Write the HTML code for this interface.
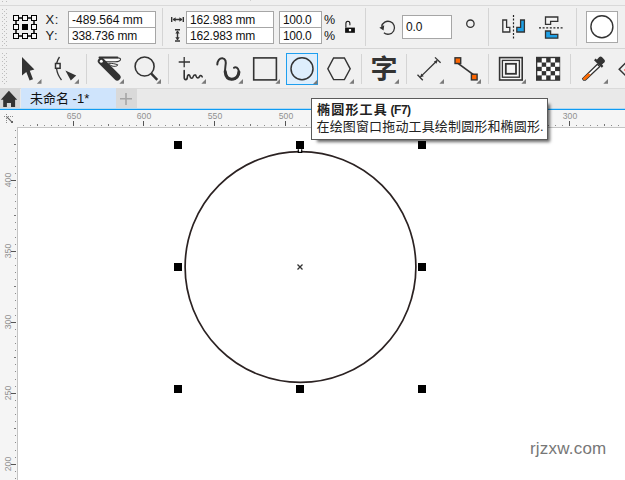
<!DOCTYPE html>
<html lang="zh-CN">
<head>
<meta charset="utf-8">
<title>未命名 -1</title>
<style>
html,body{margin:0;padding:0;}
body{width:625px;height:480px;overflow:hidden;background:#f0f0f0;position:relative;
 font-family:"Liberation Sans","Noto Sans CJK SC",sans-serif;font-size:11px;color:#1a1a1a;}
.abs{position:absolute;}
.hline{position:absolute;left:0;width:625px;height:1px;background:#d4d4d4;}
.vsep{position:absolute;width:1px;background:#d4d4d4;}
.inp{position:absolute;background:#fff;border:1px solid #a6a6a6;box-sizing:border-box;
 font-size:12px;line-height:16px;padding-left:3px;letter-spacing:-0.15px;white-space:nowrap;color:#111;}
.lbl{position:absolute;font-size:12px;line-height:12px;color:#222;white-space:nowrap;}
.grip{position:absolute;left:2px;width:5px;
 background-image:radial-gradient(circle at 0.5px 0.5px,#b8b8b8 0.55px,transparent 0.75px);
 background-size:2px 2px;}
#tabbar{position:absolute;left:0;top:88px;width:625px;height:21px;background:#e9e9e9;box-shadow:inset 0 1px 0 #dadada;}
#home{position:absolute;left:0;top:0;width:20px;height:21px;background:#d6d6d6;}
#tab{position:absolute;left:21px;top:0;width:95px;height:21px;background:#cfe4fc;
 font-size:13px;line-height:21px;color:#111;padding-left:9px;box-sizing:border-box;white-space:nowrap;}
#plus{position:absolute;left:116px;top:0;width:21px;height:21px;background:#d9d9d9;}
#blueline{position:absolute;left:0;top:108px;width:625px;height:2px;background:linear-gradient(#b3d9f1,#b3d9f1) 0 0/100% 1px no-repeat,#0e9bf3;}
#ruler{position:absolute;left:0;top:110px;width:625px;height:370px;background:#f5f5f5;}
#canvas{position:absolute;left:17px;top:127px;width:608px;height:353px;background:#fff;
 border-left:1px solid #c4c4c4;border-top:1px solid #c4c4c4;box-sizing:border-box;}
.rl span,.vl span{display:inline-block;transform:scaleX(0.9);}
.rl{position:absolute;font-size:9.6px;line-height:10px;color:#909090;white-space:nowrap;width:30px;text-align:center;}
.vl{position:absolute;font-size:9.6px;line-height:10px;color:#909090;white-space:nowrap;width:30px;text-align:center;
 transform-origin:0 0;transform:rotate(-90deg);}
#tip{position:absolute;left:311px;top:98px;width:237px;height:42px;background:#fff;
 border:1px solid #5a5a5a;box-sizing:border-box;box-shadow:4px 4px 3px -2px rgba(0,0,0,0.6);}
#tip .t{position:absolute;left:5px;top:3px;font-size:13px;letter-spacing:1.2px;line-height:16px;font-weight:bold;color:#222;white-space:nowrap;}
#tip .d{position:absolute;left:4.5px;top:19.5px;font-size:13px;letter-spacing:0.15px;line-height:16px;color:#222;white-space:nowrap;}
#wm{position:absolute;left:530px;top:438px;font-size:17px;letter-spacing:0.2px;line-height:22px;color:#777;white-space:nowrap;}
</style>
</head>
<body>
<!-- top strip -->
<div class="hline" style="top:5px;background:#d9d9d9"></div>
<div class="hline" style="top:48px"></div>

<!-- property bar -->
<div class="lbl" style="left:45.5px;top:14px;font-size:13px;letter-spacing:0.5px">X:</div>
<div class="lbl" style="left:45.5px;top:30px;font-size:13px;letter-spacing:0.5px">Y:</div>
<div class="inp" style="left:68px;top:11px;width:88px;height:17px;letter-spacing:0">-489.564 mm</div>
<div class="inp" style="left:68px;top:27px;width:88px;height:17px">338.736 mm</div>
<div class="vsep" style="left:162px;top:8px;height:38px"></div>
<div class="inp" style="left:186px;top:11px;width:88px;height:17px">162.983 mm</div>
<div class="inp" style="left:186px;top:27px;width:88px;height:17px">162.983 mm</div>
<div class="inp" style="left:279px;top:11px;width:43px;height:17px;letter-spacing:-0.35px">100.0</div>
<div class="inp" style="left:279px;top:27px;width:43px;height:17px;letter-spacing:-0.35px">100.0</div>
<div class="lbl" style="left:324px;top:14px;font-size:12.5px;color:#111">%</div>
<div class="lbl" style="left:324px;top:30px;font-size:12.5px;color:#111">%</div>
<div class="vsep" style="left:365px;top:8px;height:38px"></div>
<div class="inp" style="left:402px;top:15px;width:50px;height:24px;line-height:22px">0.0</div>
<div class="vsep" style="left:488px;top:8px;height:38px"></div>
<div class="vsep" style="left:576px;top:8px;height:38px"></div>
<div class="abs" style="left:586px;top:11px;width:32px;height:32px;background:#fff;border:1px solid #a8a8a8;box-sizing:border-box"></div>

<!-- toolbox -->
<div class="vsep" style="left:86px;top:54px;height:30px"></div>
<div class="vsep" style="left:168px;top:54px;height:30px"></div>
<div class="abs" style="left:286px;top:53px;width:32px;height:32px;background:#deeefc;border:1px solid #1e9fef;box-sizing:border-box"></div>
<div class="vsep" style="left:361px;top:54px;height:30px"></div>
<div class="vsep" style="left:406px;top:54px;height:30px"></div>
<div class="vsep" style="left:488px;top:54px;height:30px"></div>
<div class="vsep" style="left:570px;top:54px;height:30px"></div>
<div class="abs" style="left:371px;top:54.3px;font-size:26px;line-height:30px;transform:scaleX(1.04);transform-origin:50% 50%;font-weight:bold;color:#333;font-family:'Liberation Sans','Noto Sans CJK SC',sans-serif">字</div>

<!-- tab bar -->
<div id="tabbar">
  <div id="home"></div>
  <div id="tab">未命名 -1*</div>
  <div id="plus"></div>
</div>
<div id="blueline"></div>
<div id="ruler"></div>

<!-- ruler labels -->
<div class="rl" style="left:58.6px;top:111.4px"><span>650</span></div>
<div class="rl" style="left:128.6px;top:111.4px"><span>600</span></div>
<div class="rl" style="left:199.6px;top:111.4px"><span>550</span></div>
<div class="rl" style="left:270.6px;top:111.4px"><span>500</span></div>
<div class="rl" style="left:554.6px;top:111.4px"><span>300</span></div>
<div class="vl" style="left:2.6px;top:195.1px"><span>400</span></div>
<div class="vl" style="left:2.6px;top:266.1px"><span>350</span></div>
<div class="vl" style="left:2.6px;top:337.1px"><span>300</span></div>
<div class="vl" style="left:2.6px;top:408.2px"><span>250</span></div>
<div class="vl" style="left:2.6px;top:479.2px"><span>200</span></div>

<div id="canvas"></div>

<svg class="abs" style="left:0;top:0" width="625" height="480" viewBox="0 0 625 480">
<defs>
  <pattern id="gp" x="2" y="1" width="4" height="4" patternUnits="userSpaceOnUse">
    <rect x="0" y="0" width="1" height="1" fill="#bdbdbd"/><rect x="2" y="2" width="1" height="1" fill="#bdbdbd"/>
  </pattern>
</defs>
<g shape-rendering="crispEdges">
<rect x="2" y="0" width="5" height="3" fill="url(#gp)"/>
<rect x="250" y="0" width="1" height="1" fill="#cfcfcf"/>
<rect x="2" y="9" width="5" height="37" fill="url(#gp)"/>
<rect x="2" y="52" width="5" height="33" fill="url(#gp)"/>
<rect x="23" y="125" width="1" height="1" fill="#8c8c8c"/>
<rect x="30" y="125" width="1" height="1" fill="#8c8c8c"/>
<rect x="37" y="124" width="1" height="2" fill="#777"/>
<rect x="44" y="125" width="1" height="1" fill="#8c8c8c"/>
<rect x="51" y="125" width="1" height="1" fill="#8c8c8c"/>
<rect x="58" y="125" width="1" height="1" fill="#8c8c8c"/>
<rect x="65" y="125" width="1" height="1" fill="#8c8c8c"/>
<rect x="73" y="121" width="1" height="5" fill="#555"/>
<rect x="80" y="125" width="1" height="1" fill="#8c8c8c"/>
<rect x="87" y="125" width="1" height="1" fill="#8c8c8c"/>
<rect x="94" y="125" width="1" height="1" fill="#8c8c8c"/>
<rect x="101" y="125" width="1" height="1" fill="#8c8c8c"/>
<rect x="108" y="124" width="1" height="2" fill="#777"/>
<rect x="115" y="125" width="1" height="1" fill="#8c8c8c"/>
<rect x="122" y="125" width="1" height="1" fill="#8c8c8c"/>
<rect x="129" y="125" width="1" height="1" fill="#8c8c8c"/>
<rect x="136" y="125" width="1" height="1" fill="#8c8c8c"/>
<rect x="143" y="121" width="1" height="5" fill="#555"/>
<rect x="150" y="125" width="1" height="1" fill="#8c8c8c"/>
<rect x="158" y="125" width="1" height="1" fill="#8c8c8c"/>
<rect x="165" y="125" width="1" height="1" fill="#8c8c8c"/>
<rect x="172" y="125" width="1" height="1" fill="#8c8c8c"/>
<rect x="179" y="124" width="1" height="2" fill="#777"/>
<rect x="186" y="125" width="1" height="1" fill="#8c8c8c"/>
<rect x="193" y="125" width="1" height="1" fill="#8c8c8c"/>
<rect x="200" y="125" width="1" height="1" fill="#8c8c8c"/>
<rect x="207" y="125" width="1" height="1" fill="#8c8c8c"/>
<rect x="214" y="121" width="1" height="5" fill="#555"/>
<rect x="221" y="125" width="1" height="1" fill="#8c8c8c"/>
<rect x="228" y="125" width="1" height="1" fill="#8c8c8c"/>
<rect x="236" y="125" width="1" height="1" fill="#8c8c8c"/>
<rect x="243" y="125" width="1" height="1" fill="#8c8c8c"/>
<rect x="250" y="124" width="1" height="2" fill="#777"/>
<rect x="257" y="125" width="1" height="1" fill="#8c8c8c"/>
<rect x="264" y="125" width="1" height="1" fill="#8c8c8c"/>
<rect x="271" y="125" width="1" height="1" fill="#8c8c8c"/>
<rect x="278" y="125" width="1" height="1" fill="#8c8c8c"/>
<rect x="285" y="121" width="1" height="5" fill="#555"/>
<rect x="292" y="125" width="1" height="1" fill="#8c8c8c"/>
<rect x="299" y="125" width="1" height="1" fill="#8c8c8c"/>
<rect x="306" y="125" width="1" height="1" fill="#8c8c8c"/>
<rect x="314" y="125" width="1" height="1" fill="#8c8c8c"/>
<rect x="321" y="124" width="1" height="2" fill="#777"/>
<rect x="328" y="125" width="1" height="1" fill="#8c8c8c"/>
<rect x="335" y="125" width="1" height="1" fill="#8c8c8c"/>
<rect x="342" y="125" width="1" height="1" fill="#8c8c8c"/>
<rect x="349" y="125" width="1" height="1" fill="#8c8c8c"/>
<rect x="356" y="121" width="1" height="5" fill="#555"/>
<rect x="363" y="125" width="1" height="1" fill="#8c8c8c"/>
<rect x="370" y="125" width="1" height="1" fill="#8c8c8c"/>
<rect x="377" y="125" width="1" height="1" fill="#8c8c8c"/>
<rect x="384" y="125" width="1" height="1" fill="#8c8c8c"/>
<rect x="392" y="124" width="1" height="2" fill="#777"/>
<rect x="399" y="125" width="1" height="1" fill="#8c8c8c"/>
<rect x="406" y="125" width="1" height="1" fill="#8c8c8c"/>
<rect x="413" y="125" width="1" height="1" fill="#8c8c8c"/>
<rect x="420" y="125" width="1" height="1" fill="#8c8c8c"/>
<rect x="427" y="121" width="1" height="5" fill="#555"/>
<rect x="434" y="125" width="1" height="1" fill="#8c8c8c"/>
<rect x="441" y="125" width="1" height="1" fill="#8c8c8c"/>
<rect x="448" y="125" width="1" height="1" fill="#8c8c8c"/>
<rect x="455" y="125" width="1" height="1" fill="#8c8c8c"/>
<rect x="462" y="124" width="1" height="2" fill="#777"/>
<rect x="470" y="125" width="1" height="1" fill="#8c8c8c"/>
<rect x="477" y="125" width="1" height="1" fill="#8c8c8c"/>
<rect x="484" y="125" width="1" height="1" fill="#8c8c8c"/>
<rect x="491" y="125" width="1" height="1" fill="#8c8c8c"/>
<rect x="498" y="121" width="1" height="5" fill="#555"/>
<rect x="505" y="125" width="1" height="1" fill="#8c8c8c"/>
<rect x="512" y="125" width="1" height="1" fill="#8c8c8c"/>
<rect x="519" y="125" width="1" height="1" fill="#8c8c8c"/>
<rect x="526" y="125" width="1" height="1" fill="#8c8c8c"/>
<rect x="533" y="124" width="1" height="2" fill="#777"/>
<rect x="540" y="125" width="1" height="1" fill="#8c8c8c"/>
<rect x="548" y="125" width="1" height="1" fill="#8c8c8c"/>
<rect x="555" y="125" width="1" height="1" fill="#8c8c8c"/>
<rect x="562" y="125" width="1" height="1" fill="#8c8c8c"/>
<rect x="569" y="121" width="1" height="5" fill="#555"/>
<rect x="576" y="125" width="1" height="1" fill="#8c8c8c"/>
<rect x="583" y="125" width="1" height="1" fill="#8c8c8c"/>
<rect x="590" y="125" width="1" height="1" fill="#8c8c8c"/>
<rect x="597" y="125" width="1" height="1" fill="#8c8c8c"/>
<rect x="604" y="124" width="1" height="2" fill="#777"/>
<rect x="611" y="125" width="1" height="1" fill="#8c8c8c"/>
<rect x="618" y="125" width="1" height="1" fill="#8c8c8c"/>
<rect x="15" y="130" width="1" height="1" fill="#8c8c8c"/>
<rect x="15" y="137" width="1" height="1" fill="#8c8c8c"/>
<rect x="14" y="144" width="2" height="1" fill="#777"/>
<rect x="15" y="151" width="1" height="1" fill="#8c8c8c"/>
<rect x="15" y="158" width="1" height="1" fill="#8c8c8c"/>
<rect x="15" y="166" width="1" height="1" fill="#8c8c8c"/>
<rect x="15" y="173" width="1" height="1" fill="#8c8c8c"/>
<rect x="11" y="180" width="5" height="1" fill="#555"/>
<rect x="15" y="187" width="1" height="1" fill="#8c8c8c"/>
<rect x="15" y="194" width="1" height="1" fill="#8c8c8c"/>
<rect x="15" y="201" width="1" height="1" fill="#8c8c8c"/>
<rect x="15" y="208" width="1" height="1" fill="#8c8c8c"/>
<rect x="14" y="215" width="2" height="1" fill="#777"/>
<rect x="15" y="222" width="1" height="1" fill="#8c8c8c"/>
<rect x="15" y="229" width="1" height="1" fill="#8c8c8c"/>
<rect x="15" y="237" width="1" height="1" fill="#8c8c8c"/>
<rect x="15" y="244" width="1" height="1" fill="#8c8c8c"/>
<rect x="11" y="251" width="5" height="1" fill="#555"/>
<rect x="15" y="258" width="1" height="1" fill="#8c8c8c"/>
<rect x="15" y="265" width="1" height="1" fill="#8c8c8c"/>
<rect x="15" y="272" width="1" height="1" fill="#8c8c8c"/>
<rect x="15" y="279" width="1" height="1" fill="#8c8c8c"/>
<rect x="14" y="286" width="2" height="1" fill="#777"/>
<rect x="15" y="293" width="1" height="1" fill="#8c8c8c"/>
<rect x="15" y="300" width="1" height="1" fill="#8c8c8c"/>
<rect x="15" y="308" width="1" height="1" fill="#8c8c8c"/>
<rect x="15" y="315" width="1" height="1" fill="#8c8c8c"/>
<rect x="11" y="322" width="5" height="1" fill="#555"/>
<rect x="15" y="329" width="1" height="1" fill="#8c8c8c"/>
<rect x="15" y="336" width="1" height="1" fill="#8c8c8c"/>
<rect x="15" y="343" width="1" height="1" fill="#8c8c8c"/>
<rect x="15" y="350" width="1" height="1" fill="#8c8c8c"/>
<rect x="14" y="357" width="2" height="1" fill="#777"/>
<rect x="15" y="364" width="1" height="1" fill="#8c8c8c"/>
<rect x="15" y="371" width="1" height="1" fill="#8c8c8c"/>
<rect x="15" y="379" width="1" height="1" fill="#8c8c8c"/>
<rect x="15" y="386" width="1" height="1" fill="#8c8c8c"/>
<rect x="11" y="393" width="5" height="1" fill="#555"/>
<rect x="15" y="400" width="1" height="1" fill="#8c8c8c"/>
<rect x="15" y="407" width="1" height="1" fill="#8c8c8c"/>
<rect x="15" y="414" width="1" height="1" fill="#8c8c8c"/>
<rect x="15" y="421" width="1" height="1" fill="#8c8c8c"/>
<rect x="14" y="428" width="2" height="1" fill="#777"/>
<rect x="15" y="435" width="1" height="1" fill="#8c8c8c"/>
<rect x="15" y="442" width="1" height="1" fill="#8c8c8c"/>
<rect x="15" y="450" width="1" height="1" fill="#8c8c8c"/>
<rect x="15" y="457" width="1" height="1" fill="#8c8c8c"/>
<rect x="11" y="464" width="5" height="1" fill="#555"/>
<rect x="15" y="471" width="1" height="1" fill="#8c8c8c"/>
<rect x="15" y="478" width="1" height="1" fill="#8c8c8c"/>
</g>
  <!-- ruler origin icon -->
  <g fill="#8a8a8a" shape-rendering="crispEdges"><rect x="4" y="116" width="1" height="1"/><rect x="8" y="116" width="1" height="1"/><rect x="10" y="116" width="1" height="1"/><rect x="12" y="116" width="1" height="1"/><rect x="6" y="114" width="1" height="1"/><rect x="6" y="116" width="1" height="1"/><rect x="6" y="118" width="1" height="1"/><rect x="6" y="120" width="1" height="1"/><rect x="6" y="122" width="1" height="1"/></g>
  <path d="M6.6 116.6L11.8 121.8" stroke="#666" stroke-width="1.2" fill="none"/>
  <rect x="11" y="121" width="2" height="2" fill="#666"/>

  <!-- object origin icon -->
  <g shape-rendering="crispEdges" stroke="#000" stroke-width="1" fill="none">
    <rect x="16" y="18" width="18" height="18" stroke-width="1.5" shape-rendering="auto"/>
    <g fill="#f7f7f7">
      <rect x="13.5" y="15.5" width="5" height="5"/><rect x="22.5" y="15.5" width="5" height="5"/><rect x="31.5" y="15.5" width="5" height="5"/>
      <rect x="13.5" y="24.5" width="5" height="5"/><rect x="31.5" y="24.5" width="5" height="5"/>
      <rect x="13.5" y="33.5" width="5" height="5"/><rect x="22.5" y="33.5" width="5" height="5"/><rect x="31.5" y="33.5" width="5" height="5"/>
    </g>
    <rect x="22" y="24" width="6" height="6" fill="#000" stroke="none"/>
  </g>

  <!-- width / height icons -->
  <g stroke="#333" stroke-width="1.4" fill="none">
    <path d="M171.7 17V22M183.3 17V22M173 19.5H182"/>
    <path d="M175 29.8H180M175 41H180M177.5 31V40"/>
  </g>
  <g fill="#333">
    <path d="M172.6 19.5l3-2.2v4.4zM182.4 19.5l-3-2.2v4.4z"/>
    <path d="M177.5 30.6l-2.2 3h4.4zM177.5 40.2l-2.2-3h4.4z"/>
  </g>

  <!-- lock -->
  <g>
    <rect x="345.1" y="27.6" width="9.8" height="5.2" fill="#111"/>
    <path d="M345.9 27.5V23.5a2 2.3 0 0 1 4 0V25.3" stroke="#111" stroke-width="1.05" fill="none"/>
    <rect x="348.9" y="29" width="2.2" height="2.2" fill="#fff"/>
  </g>

  <!-- rotate icon -->
  <path d="M381.6 26.6A6.5 6.5 0 1 1 383.9 32.8" stroke="#333" stroke-width="1.3" fill="none"/>
  <path d="M379.4 27.8L384.2 25.2L383.6 30.4Z" fill="#333"/>

  <!-- small circle -->
  <circle cx="470.4" cy="23.7" r="3.7" fill="none" stroke="#333" stroke-width="1.3"/>

  <!-- mirror horizontal -->
  <path d="M502.8 20H506.6V27.4H509.8V32H502.8Z" fill="#f4f4f4" stroke="#333" stroke-width="1.3"/>
  <path d="M524.4 20H520.6V27.4H516.8V32H524.4Z" fill="#1ea0e6" stroke="#333" stroke-width="1.3"/>
  <path d="M513.5 15V39" stroke="#222" stroke-width="1.2" stroke-dasharray="2 1.6"/>

  <!-- mirror vertical -->
  <path d="M545.5 17H557.8V21.3H550.6V24.3H545.5Z" fill="#f4f4f4" stroke="#333" stroke-width="1.3"/>
  <path d="M545.5 38.2H557.8V34.4H550.6V31H545.5Z" fill="#1ea0e6" stroke="#333" stroke-width="1.3"/>
  <path d="M539 27.8H563" stroke="#222" stroke-width="1.2" stroke-dasharray="2 1.6"/>

  <!-- ellipse property button -->
  <circle cx="601.9" cy="26.8" r="11" fill="none" stroke="#333" stroke-width="1.4"/>

  <!-- ===== toolbox icons ===== -->
  <g fill="#7a7a7a">
    <path d="M41.5 79v4.7h-4.7z"/>
    <path d="M79 79v4.7h-4.7z"/>
    <path d="M124 79v4.7h-4.7z"/>
    <path d="M161 79v4.7h-4.7z"/>
    <path d="M206 79v4.7h-4.7z"/>
    <path d="M243 79v4.7h-4.7z"/>
    <path d="M280 79v4.7h-4.7z"/>
    <path d="M317.5 79.5v4.7h-4.7z"/>
    <path d="M354 79v4.7h-4.7z"/>
    <path d="M399 79v4.7h-4.7z"/>
    <path d="M444 79v4.7h-4.7z"/>
    <path d="M481 79v4.7h-4.7z"/>
    <path d="M526 79v4.7h-4.7z"/>
    <path d="M608 79v4.7h-4.7z"/>
  </g>

  <!-- pick -->
  <path d="M22 57V75.5L26.3 72L29.6 80.6L33 79.2L29.8 70.8L34.4 69.6Z" fill="#333"/>
  <!-- shape tool -->
  <path d="M59.5 57C54.5 64 56 73 61.5 80" stroke="#333" stroke-width="1.3" fill="none"/>
  <rect x="55.5" y="63.5" width="4.6" height="4.8" fill="#f8f8f8" stroke="#333" stroke-width="1.5"/>
  <path d="M65.4 70.4L76.2 75.6L70.8 80.6Z" fill="#333"/>

  <!-- knife -->
  <path d="M100 57.7H116.5C119.4 57.7 121 58.6 120.5 59.8C119.8 61.2 117.8 61.8 115.4 61.8H105Z" fill="#fafafa" stroke="#333" stroke-width="1.1" stroke-linejoin="round"/>
  <path d="M99.5 57.6H117.4" stroke="#333" stroke-width="2" fill="none" stroke-linecap="round"/>
  <path d="M108.6 63.2C112 63.3 115.8 63.9 117.9 64.9C117.2 66.6 113.8 66.8 110.8 65.6Z" fill="#fafafa" stroke="#333" stroke-width="1" stroke-linejoin="round"/>
  <path d="M101.2 61.2L117.2 77.2" stroke="#333" stroke-width="6.8" stroke-linecap="round" fill="none"/>
  <circle cx="101.3" cy="61.3" r="1.5" fill="#fff"/>

  <!-- zoom -->
  <circle cx="144.6" cy="66.5" r="9.5" fill="none" stroke="#333" stroke-width="1.6"/>
  <path d="M151.3 73.6L157.3 79.8" stroke="#333" stroke-width="2.4" fill="none"/>

  <!-- freehand -->
  <path d="M178.7 62H190M184.2 57V67.2" stroke="#333" stroke-width="1.3" fill="none"/>
  <path d="M184.2 70.6V77.6C184.2 80.3 187.2 80.3 187.3 77.4C187.4 74.4 189.6 74 190 76.4C190.4 78.8 192.6 78.8 193.2 76.6C193.8 74.4 195.8 74.4 196.2 76.4C196.6 78.4 198.8 78.4 199.6 76.4C200.2 75 201.4 75.2 202.2 76.8" stroke="#333" stroke-width="1.6" fill="none" stroke-linecap="round" stroke-linejoin="round"/>

  <!-- artistic media -->
  <path d="M217.3 64.6C217.4 60.6 219.6 58 222.4 58.2C225.6 58.5 226.4 61.8 225.4 66.4C224.2 72 225.6 79.2 231.8 79.3C236.8 79.3 239.6 75.2 238.8 71.2C238.2 67.8 235.6 66.4 234 67.8" stroke="#333" stroke-width="2" fill="none" stroke-linecap="round"/>
  <path d="M225.2 71.6C225.6 76 227.6 79.2 231.8 79.2C236.2 79.2 238.8 75.6 238.9 72" stroke="#333" stroke-width="3.1" fill="none" stroke-linecap="round"/>

  <!-- rectangle -->
  <rect x="253.7" y="57.9" width="22.7" height="22" fill="none" stroke="#333" stroke-width="1.6"/>
  <!-- ellipse (selected) -->
  <circle cx="302" cy="68.8" r="11" fill="none" stroke="#333" stroke-width="1.5"/>
  <!-- polygon -->
  <path d="M327.8 68.8L333.6 58H344.4L350.2 68.8L344.4 79.6H333.6Z" fill="none" stroke="#333" stroke-width="1.4"/>

  <!-- dimension -->
  <g stroke="#333" stroke-width="1.3" fill="none">
    <path d="M420.5 76.9L437.2 60.5"/>
    <path d="M417.5 74.8L422.8 80.2"/>
    <path d="M435 57.4L440.6 62.8"/>
  </g>
  <path d="M420.2 77.2l1-3.6 2.6 2.6zM437.5 60.2l-1 3.6-2.6-2.6z" fill="#333"/>

  <!-- connector -->
  <path d="M457 62.6L474.4 75.4" stroke="#333" stroke-width="1.8" fill="none"/>
  <rect x="455" y="57.8" width="5.7" height="5.7" fill="#ff6600" stroke="#333" stroke-width="1.4"/>
  <rect x="471.4" y="74.2" width="5.7" height="5.7" fill="#ff6600" stroke="#333" stroke-width="1.4"/>

  <!-- contour -->
  <g fill="none" stroke="#333">
    <rect x="499.6" y="57.6" width="22.6" height="22.4" stroke-width="1.6" fill="#fafafa"/>
    <rect x="502.4" y="60.4" width="17" height="16.8" stroke-width="1.35"/>
    <rect x="505.8" y="63.8" width="10.2" height="10" stroke-width="1.8" fill="#f4f4f4"/>
  </g>

  <!-- transparency checker -->
  <rect x="536" y="56.8" width="24.2" height="24" fill="#333"/>
  <g fill="#fff">
    <rect x="541.74" y="58.20" width="4.44" height="4.30"/><rect x="550.62" y="58.20" width="4.44" height="4.30"/><rect x="537.30" y="62.50" width="4.44" height="4.30"/><rect x="546.18" y="62.50" width="4.44" height="4.30"/><rect x="555.06" y="62.50" width="4.44" height="4.30"/><rect x="541.74" y="66.80" width="4.44" height="4.30"/><rect x="550.62" y="66.80" width="4.44" height="4.30"/><rect x="537.30" y="71.10" width="4.44" height="4.30"/><rect x="546.18" y="71.10" width="4.44" height="4.30"/><rect x="555.06" y="71.10" width="4.44" height="4.30"/><rect x="541.74" y="75.40" width="4.44" height="4.30"/><rect x="550.62" y="75.40" width="4.44" height="4.30"/>
  </g>

  <!-- eyedropper -->
  <path d="M597.4 64.2L582.6 78.6L583.4 80L585.2 80.2L599.8 66.6Z" fill="#fff" stroke="#333" stroke-width="1.3" stroke-linejoin="round"/>
  <path d="M588.4 73.2L582.8 78.6L583.4 79.8L585.2 80L590.8 74.8Z" fill="#ff6a00"/>
  <path d="M594.8 59.4L602.6 66.8" stroke="#333" stroke-width="2.3" fill="none"/>
  <rect x="597" y="57.3" width="7.2" height="7.2" rx="1.8" fill="#333" transform="rotate(45 600.6 60.9)"/>

  <!-- partial next icon -->
  <path d="M626 62.5L619.2 69.3L626 76" stroke="#333" stroke-width="1.5" fill="none"/>
  <rect x="624" y="69" width="1" height="2" fill="#f88"/>

  <!-- home icon -->
  <path d="M8.9 90.7L17.2 99.8H15.1V107H11V103H6.9V107H3.2V99.8H0.8Z" fill="#333"/>
  <!-- plus -->
  <path d="M120 98.8H132M126 93V105" stroke="#a6a6a6" stroke-width="1.6" fill="none"/>

  <!-- circle drawing -->
  <circle cx="300.5" cy="267" r="115.4" fill="none" stroke="#2b2222" stroke-width="1.7"/>
  <g fill="#000" shape-rendering="crispEdges">
    <rect x="174" y="141" width="8" height="8"/><rect x="296" y="141" width="8" height="8"/><rect x="418" y="141" width="8" height="8"/>
    <rect x="174" y="263" width="8" height="8"/><rect x="418" y="263" width="8" height="8"/>
    <rect x="174" y="385" width="8" height="8"/><rect x="296" y="385" width="8" height="8"/><rect x="418" y="385" width="8" height="8"/>
  </g>
  <path d="M298.3 149.3V152.3H301.7V149.3" stroke="#000" stroke-width="1.2" fill="#fff"/>
  <path d="M297.5 264.5l5 5M302.5 264.5l-5 5" stroke="#333" stroke-width="1.3" fill="none"/>
</svg>

<div id="tip"><div class="t">椭圆形工具<span style="font-size:12px;letter-spacing:-0.5px;margin-left:2.6px;position:relative;top:-0.5px">(F7)</span></div><div class="d">在绘图窗口拖动工具绘制圆形和椭圆形.</div></div>
<div id="wm">rjzxw.com</div>
</body>
</html>
